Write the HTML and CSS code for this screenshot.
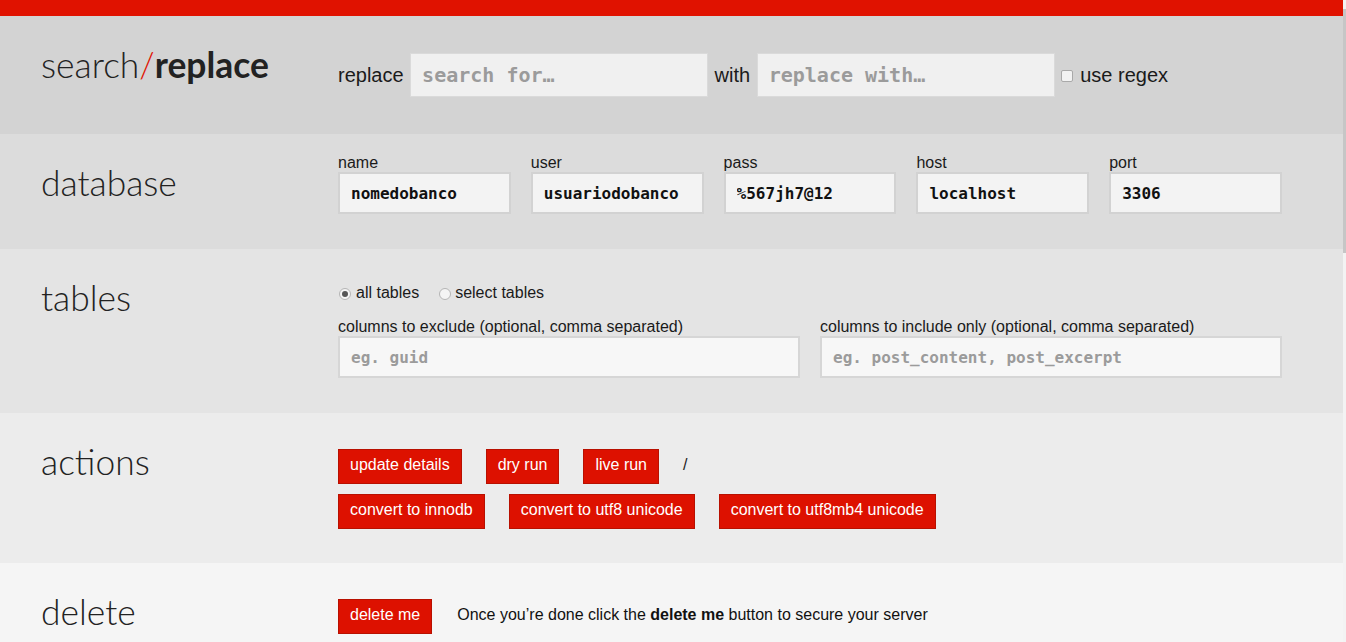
FILE: index.html
```html
<!DOCTYPE html>
<html lang="en">
<head>
<meta charset="utf-8">
<title>search/replace</title>
<link rel="stylesheet" href="styles.css">
</head>
<body>
<div class="topbar"></div>

<section class="row row-search">
  <h1 class="title"><span class="t-light">search</span><span class="t-slash">/</span><span class="t-bold">replace</span></h1>
  <div class="content search-fields">
    <span class="big-label">replace</span>
    <input class="big-input" type="text" placeholder="search for…">
    <span class="big-label">with</span>
    <input class="big-input" type="text" placeholder="replace with…">
    <label class="check"><input class="checkbox" type="checkbox"><span>use regex</span></label>
  </div>
</section>

<section class="row row-db">
  <h2 class="title"><span class="t-light">database</span></h2>
  <div class="content db-grid">
    <div class="field"><label class="field-label">name</label><input class="box-input db-input" type="text" value="nomedobanco"></div>
    <div class="field"><label class="field-label">user</label><input class="box-input db-input" type="text" value="usuariodobanco"></div>
    <div class="field"><label class="field-label">pass</label><input class="box-input db-input" type="text" value="%567jh7@12"></div>
    <div class="field"><label class="field-label">host</label><input class="box-input db-input" type="text" value="localhost"></div>
    <div class="field"><label class="field-label">port</label><input class="box-input db-input" type="text" value="3306"></div>
  </div>
</section>

<section class="row row-tables">
  <h2 class="title"><span class="t-light">tables</span></h2>
  <div class="content">
    <div class="radios">
      <label class="radio-label"><input class="radio" type="radio" name="tables" checked><span>all tables</span></label>
      <label class="radio-label"><input class="radio" type="radio" name="tables"><span>select tables</span></label>
    </div>
    <div class="cols-grid">
      <div class="field"><label class="field-label">columns to exclude (optional, comma separated)</label><input class="box-input tbl-input" type="text" placeholder="eg. guid"></div>
      <div class="field"><label class="field-label">columns to include only (optional, comma separated)</label><input class="box-input tbl-input" type="text" placeholder="eg. post_content, post_excerpt"></div>
    </div>
  </div>
</section>

<section class="row row-actions">
  <h2 class="title"><span class="t-light">actions</span></h2>
  <div class="content actions">
    <div class="btn-row">
      <button class="btn">update details</button>
      <button class="btn">dry run</button>
      <button class="btn">live run</button>
      <span class="spinner">/</span>
    </div>
    <div class="btn-row">
      <button class="btn">convert to innodb</button>
      <button class="btn">convert to utf8 unicode</button>
      <button class="btn">convert to utf8mb4 unicode</button>
    </div>
  </div>
</section>

<section class="row row-delete">
  <h2 class="title"><span class="t-light">delete</span></h2>
  <div class="content delete-row">
    <button class="btn">delete me</button>
    <p class="note">Once you’re done click the <strong>delete me</strong> button to secure your server</p>
  </div>
</section>

<div class="scrollbar"><div class="scrollbar-thumb"></div></div>
</body>
</html>
```

FILE: styles.css
```css
html {
  background: #f5f5f5;
}
body {
  margin: 0;
  font-family: "Liberation Sans", Arial, sans-serif;
  font-size: 16px;
  color: #1a1a1a;
  min-height: 1690px;
  background: #f5f5f5;
}
.topbar {
  height: 16px;
  background: #e01200;
}
.row {
  display: flex;
  align-items: flex-start;
}
.title {
  flex: none;
  width: 338px;
  box-sizing: border-box;
  margin: 0;
  padding-left: 41px;
  padding-top: 27px;
  font-family: Lato, "Open Sans", sans-serif;
  font-size: 35.4px;
  line-height: 44px;
  font-weight: 300;
  color: #222;
}
.t-light { font-weight: 300; }
.t-slash { font-weight: 300; color: #e01200; }
.t-bold { font-weight: 700; }
.content {
  flex: none;
  width: 944px;
}

/* search row */
.row-search { background: #d3d3d3; }
.search-fields {
  display: flex;
  align-items: center;
  gap: 6.5px;
  padding: 37px 0;
}
.big-label {
  font-size: 20px;
}
.big-input {
  box-sizing: border-box;
  width: 298px;
  height: 44px;
  border: 1px solid #dadada;
  background: #f0f0f0;
  padding: 0 11px;
  margin: 0;
  font-family: "DejaVu Sans Mono", monospace;
  font-weight: bold;
  font-size: 20px;
  color: #111;
  outline: none;
}
.big-input::placeholder,
.box-input::placeholder {
  color: #9b9b9b;
  opacity: 1;
}
.check {
  display: flex;
  align-items: center;
  gap: 7px;
  font-size: 20px;
}
.checkbox {
  appearance: none;
  -webkit-appearance: none;
  margin: 1px 0 0;
  width: 12px;
  height: 12px;
  box-sizing: border-box;
  border: 1px solid #a9a9a9;
  border-radius: 2px;
  background: #f2f2f2;
}

/* database */
.row-db { background: #dcdcdc; }
.db-grid {
  display: grid;
  grid-template-columns: repeat(5, 1fr);
  column-gap: 20px;
  padding: 20px 0 35px;
}
.field {
  display: flex;
  flex-direction: column;
}
.field-label {
  display: block;
  line-height: 18px;
}
.box-input {
  box-sizing: border-box;
  width: 100%;
  height: 42px;
  margin: 0;
  border: 2px solid #d2d2d2;
  padding: 0 11px;
  font-family: "DejaVu Sans Mono", monospace;
  font-weight: bold;
  font-size: 16px;
  color: #111;
  outline: none;
}
.db-input { background: #f3f3f3; }
.tbl-input { background: #f7f7f7; border-color: #d6d6d6; }

/* tables */
.row-tables { background: #e4e4e4; }
.row-tables .content { padding: 35px 0; }
.radios {
  display: flex;
  gap: 20px;
  line-height: 18px;
  margin-bottom: 15px;
}
.radio-label {
  display: flex;
  align-items: center;
  gap: 5px;
}
.radio {
  appearance: none;
  -webkit-appearance: none;
  margin: 1px 0 0 1px;
  width: 12px;
  height: 12px;
  box-sizing: border-box;
  border: 1px solid #b5b5b5;
  border-radius: 50%;
  background: #f4f4f4;
  display: grid;
  place-items: center;
}
.radio-label + .radio-label .radio { margin-left: 0; }
.radio-label + .radio-label { gap: 4px; }
.radio:checked::after {
  content: "";
  width: 6px;
  height: 6px;
  border-radius: 50%;
  background: #555;
}
.cols-grid {
  display: grid;
  grid-template-columns: 1fr 1fr;
  column-gap: 20px;
}
.cols-grid .field-label { line-height: 19px; }

/* actions */
.row-actions { background: #ececec; }
.actions {
  padding: 36px 0 34px;
  display: flex;
  flex-direction: column;
  gap: 10px;
}
.btn-row {
  display: flex;
  align-items: center;
  gap: 24px;
}
.btn {
  box-sizing: border-box;
  height: 35px;
  margin: 0;
  padding: 0 11px 4px;
  border: 1px solid #b81000;
  background: #dd1100;
  color: #fff;
  font-family: "Liberation Sans", Arial, sans-serif;
  font-size: 16px;
  line-height: 29px;
  border-radius: 0;
}
.spinner {
  color: #222;
  margin-top: -4px;
}

/* delete */
.row-delete { background: #f5f5f5; }
.delete-row {
  display: flex;
  align-items: baseline;
  gap: 25px;
  padding: 36px 0;
}
.note {
  margin: 0;
  color: #111;
}
.note strong { font-weight: bold; }

/* thin overlay scrollbar at the right edge */
.scrollbar {
  position: fixed;
  top: 0;
  right: 0;
  bottom: 0;
  width: 3px;
  background: #f3f3f3;
}
.scrollbar-thumb {
  margin-top: 9px;
  height: 244px;
  background: #c6c6c6;
}
```
